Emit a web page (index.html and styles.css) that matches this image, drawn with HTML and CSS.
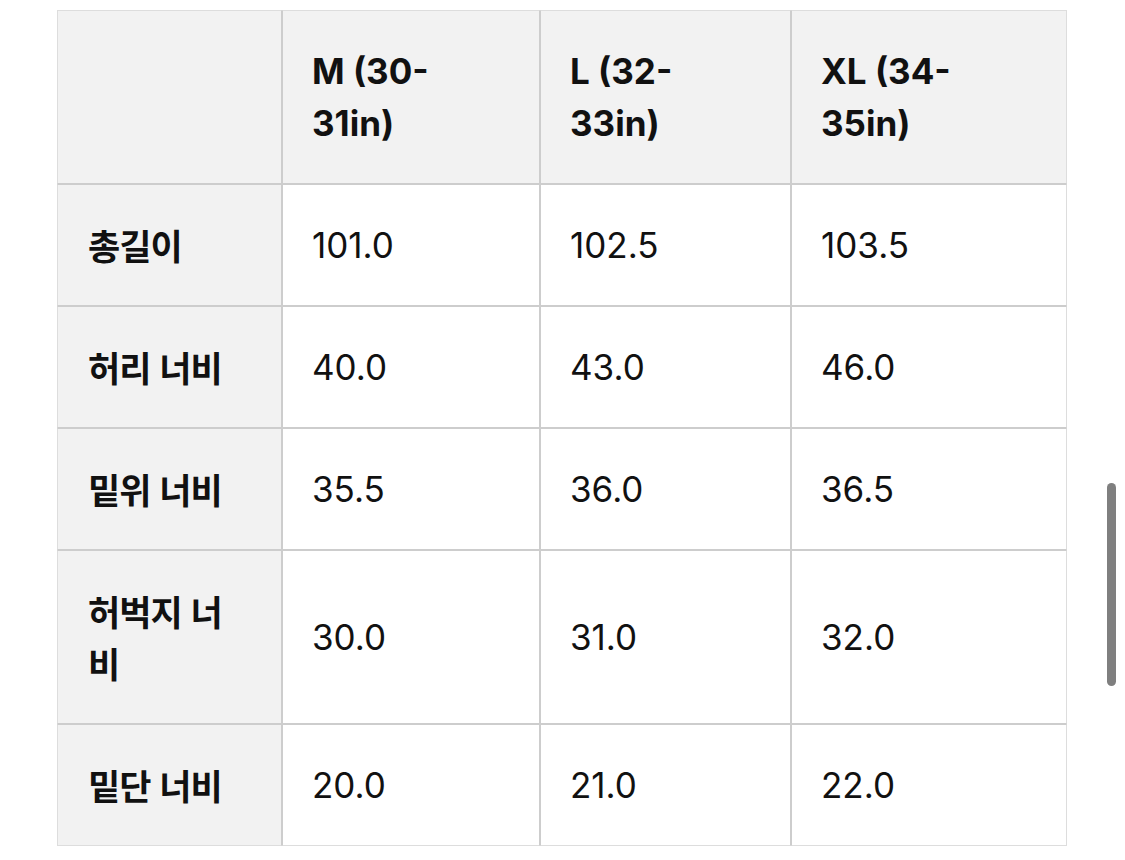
FILE: index.html
```html
<!DOCTYPE html>
<html lang="ko">
<head>
<meta charset="utf-8">
<title>사이즈 표</title>
<link rel="stylesheet" href="styles.css">
</head>
<body>
<div class="page">
  <table class="size-table">
    <colgroup>
      <col class="c1"><col class="c2"><col class="c3"><col class="c4">
    </colgroup>
    <thead>
      <tr>
        <th class="corner"></th>
        <th>M (30-<br>31in)</th>
        <th>L (32-<br>33in)</th>
        <th>XL (34-<br>35in)</th>
      </tr>
    </thead>
    <tbody>
      <tr><th>총길이</th><td>101.0</td><td>102.5</td><td>103.5</td></tr>
      <tr><th>허리 너비</th><td>40.0</td><td>43.0</td><td>46.0</td></tr>
      <tr><th>밑위 너비</th><td>35.5</td><td>36.0</td><td>36.5</td></tr>
      <tr><th>허벅지 너비</th><td>30.0</td><td>31.0</td><td>32.0</td></tr>
      <tr><th>밑단 너비</th><td>20.0</td><td>21.0</td><td>22.0</td></tr>
    </tbody>
  </table>
  <div class="scrollbar"></div>
</div>
</body>
</html>
```
FILE: styles.css
```css
html, body {
  margin: 0;
  padding: 0;
  background: #ffffff;
}
.page {
  padding: 10px 0 0 57px;
  font-family: Inter, "Noto Sans CJK KR", sans-serif;
  color: #111111;
}
.size-table {
  border-collapse: separate;
  border-spacing: 0;
  table-layout: fixed;
  width: 1010px;
}
.c1 { width: 225px; }
.c2 { width: 258px; }
.c3 { width: 251px; }
.c4 { width: 276px; }
.size-table th,
.size-table td {
  border: 1px solid #cdcdcd;
  padding: 34px 20px 34px 29px;
  font-size: 35px;
  line-height: 52px;
  text-align: left;
  vertical-align: middle;
}
.size-table thead th {
  border-top-color: #dddddd;
}
.size-table tr > :first-child {
  border-left-color: #dddddd;
}
.size-table tr > :last-child {
  border-right-color: #dddddd;
}
.size-table tbody tr:last-child > * {
  border-bottom-color: #dddddd;
}
.size-table th {
  background: #f2f2f2;
  font-weight: 700;
}
.size-table tbody th {
  font-family: "Noto Sans CJK KR", Inter, sans-serif;
  font-size: 35px;
  letter-spacing: -1px;
  padding-left: 30px;
  padding-right: 44px;
  word-break: break-all;
}
.size-table td {
  background: #ffffff;
  font-weight: 400;
}
.scrollbar {
  position: fixed;
  left: 1107px;
  top: 483px;
  width: 9px;
  height: 203px;
  border-radius: 5px;
  background: #7f7f7f;
}
```
